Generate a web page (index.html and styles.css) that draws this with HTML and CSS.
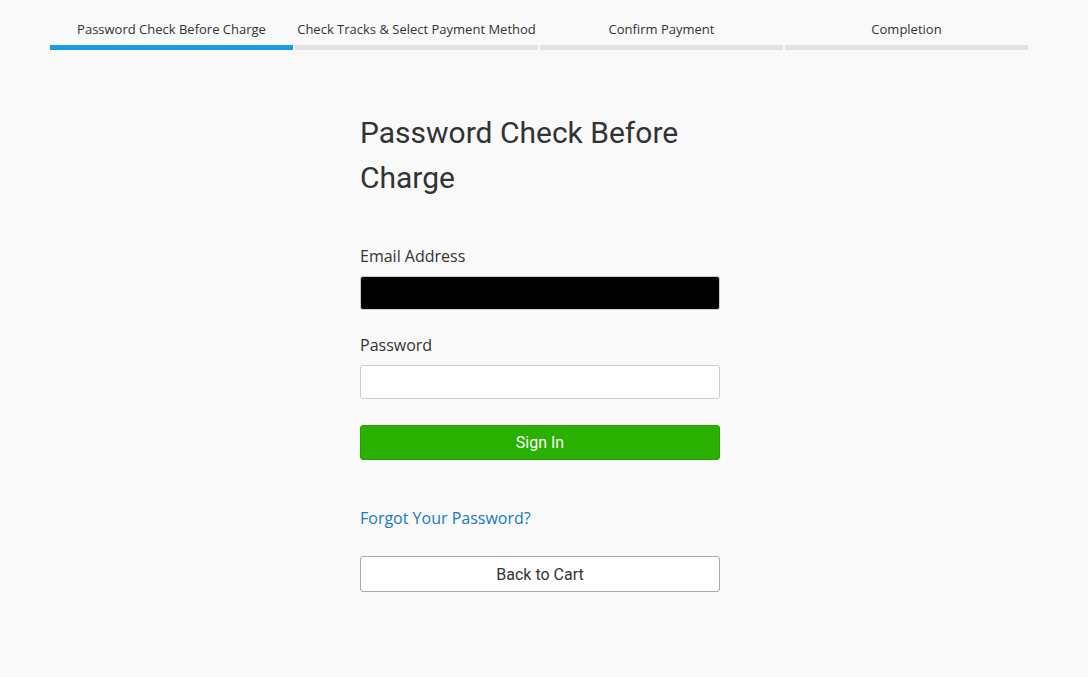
FILE: index.html
```html
<!DOCTYPE html>
<html>
<head>
<meta charset="utf-8">
<link rel="stylesheet" href="styles.css">
</head>
<body>
<div class="steps">
  <div class="step active"><div class="step-label">Password Check Before Charge</div><div class="step-bar"></div></div>
  <div class="step"><div class="step-label">Check Tracks &amp; Select Payment Method</div><div class="step-bar"></div></div>
  <div class="step"><div class="step-label">Confirm Payment</div><div class="step-bar"></div></div>
  <div class="step"><div class="step-label">Completion</div><div class="step-bar"></div></div>
</div>
<div class="content">
  <main class="form-wrap">
    <h1 class="title">Password Check Before Charge</h1>
    <label class="field-label">Email Address</label>
    <input class="field field-filled" type="text">
    <label class="field-label field-label-pw">Password</label>
    <input class="field" type="password">
    <button class="btn btn-primary">Sign In</button>
    <a class="forgot" href="#">Forgot Your Password?</a>
    <button class="btn btn-secondary">Back to Cart</button>
  </main>
</div>
</body>
</html>
```
FILE: styles.css
```css
html, body {
  margin: 0;
  padding: 0;
  background: #f9f9f9;
}
body {
  font-family: "Open Sans", sans-serif;
  color: #333;
}
.steps {
  display: flex;
  gap: 2px;
  padding: 20px 60px 0 50px;
}
.step {
  flex: 1;
  display: flex;
  flex-direction: column;
  align-items: center;
}
.step-label {
  font-size: 13px;
  line-height: 18px;
  color: #333;
  white-space: nowrap;
}
.step-bar {
  margin-top: 7px;
  height: 5px;
  width: 100%;
  background: #e2e2e2;
}
.step.active .step-bar {
  background: #1a9be6;
}
.content {
  padding: 0 58px 0 50px;
}
.form-wrap {
  width: 360px;
  margin: 0 auto;
  display: flex;
  flex-direction: column;
}
.title {
  font-family: Roboto, sans-serif;
  font-weight: 400;
  font-size: 30px;
  line-height: 45px;
  margin: 60px 0 0;
  color: #333;
}
.field-label {
  font-size: 16px;
  line-height: 24px;
  margin-top: 44px;
  color: #333;
}
.field-label-pw {
  margin-top: 23px;
}
.field {
  margin-top: 8px;
  box-sizing: border-box;
  height: 34px;
  width: 360px;
  border: 1px solid #ccc;
  border-radius: 3px;
  background: #fff;
  font-size: 16px;
}
.field-filled {
  background: #000;
}
.btn {
  box-sizing: border-box;
  width: 360px;
  font-family: Roboto, sans-serif;
  font-size: 16px;
  border-radius: 3px;
  cursor: pointer;
}
.btn-primary {
  margin-top: 26px;
  height: 35px;
  background: #29b000;
  color: #fff;
  border: 1px solid #24a000;
}
.forgot {
  margin-top: 46px;
  font-size: 16px;
  line-height: 24px;
  color: #147ac4;
  text-decoration: none;
}
.btn-secondary {
  margin-top: 26px;
  height: 36px;
  background: #fff;
  color: #333;
  border: 1px solid #aaa;
}
```
